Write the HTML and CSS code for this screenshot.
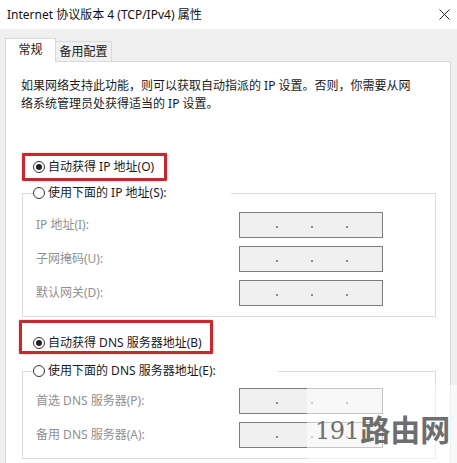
FILE: index.html
```html
<!DOCTYPE html>
<html lang="zh-CN">
<head>
<meta charset="utf-8">
<title>Internet 协议版本 4 (TCP/IPv4) 属性</title>
<link rel="stylesheet" href="styles.css">
</head>
<body>
<div class="page">
  <div class="titlebar">
    <span class="title">Internet 协议版本 4 (TCP/IPv4) 属性</span>
    <svg class="close" width="11" height="11" viewBox="0 0 11 11"><path d="M0.5 0.5 L10.5 10.5 M10.5 0.5 L0.5 10.5" stroke="#222" stroke-width="1" fill="none"/></svg>
  </div>
  <div class="area">
    <div class="tabs">
      <div class="tab tab-active">常规</div>
      <div class="tab">备用配置</div>
    </div>
    <div class="panel">
      <p class="desc">如果网络支持此功能，则可以获取自动指派的 IP 设置。否则，你需要从网<br>络系统管理员处获得适当的 IP 设置。</p>

      <div class="radio-row row-auto-ip">
        <span class="radio checked"></span><span>自动获得 IP 地址(O)</span>
        <span class="mark mark-ip"></span>
      </div>

      <fieldset class="group group-ip">
        <legend class="radio-row legend-ip"><span class="radio"></span><span>使用下面的 IP 地址(S):</span></legend>
        <div class="fields">
          <span class="label">IP 地址(I):</span>
          <div class="ip"><i class="dot"></i><i class="dot"></i><i class="dot"></i></div>
          <span class="label">子网掩码(U):</span>
          <div class="ip"><i class="dot"></i><i class="dot"></i><i class="dot"></i></div>
          <span class="label">默认网关(D):</span>
          <div class="ip"><i class="dot"></i><i class="dot"></i><i class="dot"></i></div>
        </div>
      </fieldset>

      <div class="radio-row row-auto-dns">
        <span class="radio checked"></span><span>自动获得 DNS 服务器地址(B)</span>
        <span class="mark mark-dns"></span>
      </div>

      <fieldset class="group group-dns">
        <legend class="radio-row legend-dns"><span class="radio"></span><span>使用下面的 DNS 服务器地址(E):</span></legend>
        <div class="fields fields-dns">
          <span class="label">首选 DNS 服务器(P):</span>
          <div class="ip"><i class="dot"></i><i class="dot"></i><i class="dot"></i></div>
          <span class="label">备用 DNS 服务器(A):</span>
          <div class="ip"><i class="dot"></i><i class="dot"></i><i class="dot"></i></div>
        </div>
      </fieldset>
    </div>
  </div>
  <div class="watermark"><span class="wm-num">191</span><span class="wm-cn">路由网</span></div>
</div>
</body>
</html>
```

FILE: styles.css
```css
html, body {
  margin: 0;
  padding: 0;
}
body {
  width: 457px;
  height: 463px;
  overflow: hidden;
  background: #f0f0f0;
  font-family: "Noto Sans", "Noto Sans CJK SC", sans-serif;
  font-size: 12px;
  color: #1a1a1a;
}
.page {
  position: relative;
  width: 457px;
  height: 463px;
  overflow: hidden;
}
.titlebar {
  height: 29px;
  background: #fff;
  display: flex;
  align-items: center;
  justify-content: space-between;
  padding: 0 7px 0 7px;
  box-sizing: border-box;
}
.title {
  font-size: 12px;
  line-height: 16px;
  color: #111;
}
.close {
  display: block;
  margin-right: 0;
}
.area {
  padding: 0 6px 0 5px;
}
.tabs {
  height: 32px;
  display: flex;
  align-items: flex-end;
  position: relative;
  z-index: 2;
}
.tab {
  box-sizing: border-box;
  height: 20px;
  width: 56px;
  border: 1px solid #d9d9d9;
  border-left: none;
  border-bottom: none;
  background: #f0f0f0;
  display: flex;
  align-items: center;
  justify-content: center;
  font-size: 12px;
  line-height: 14px;
  padding-top: 1px;
}
.tab-active {
  width: 51px;
  height: 24px;
  margin-bottom: -1px;
  background: #fff;
  border-left: 1px solid #d9d9d9;
  padding: 0 0 2px 0;
}
.panel {
  background: #fff;
  border: 1px solid #d9d9d9;
  height: 420px;
  padding: 15px 0 0 15px;
  box-sizing: border-box;
}
.desc {
  margin: 0;
  line-height: 18px;
  font-size: 12px;
  color: #1a1a1a;
  white-space: nowrap;
}
.radio-row {
  position: relative;
  display: flex;
  align-items: center;
  height: 16px;
  line-height: 16px;
  padding-left: 12px;
  color: #1a1a1a;
}
.radio {
  box-sizing: border-box;
  width: 12px;
  height: 12px;
  border: 1px solid #333;
  border-radius: 50%;
  margin-right: 3px;
  display: flex;
  align-items: center;
  justify-content: center;
  background: #fff;
}
.radio.checked::after {
  content: "";
  width: 6px;
  height: 6px;
  border-radius: 50%;
  background: #222;
}
.row-auto-ip {
  margin-top: 46px;
}
.row-auto-dns {
  margin-top: 18px;
}
.mark {
  position: absolute;
  box-sizing: border-box;
  border: 3px solid #c22a2f;
  border-radius: 1px;
  box-shadow: 0 0 2px rgba(200, 40, 45, 0.45);
  pointer-events: none;
}
.mark-ip {
  left: 1px;
  top: -6px;
  width: 145px;
  height: 28px;
}
.mark-dns {
  left: -2px;
  top: -15px;
  width: 194px;
  height: 34px;
}
.group {
  margin: 10px 0 0 1px;
  padding: 0;
  width: 414px;
  box-sizing: border-box;
  border: 1px solid #dcdcdc;
  min-inline-size: 0;
}
.group-dns {
  margin-top: 12px;
}
.group legend {
  margin-left: 10px;
  padding: 0;
  box-sizing: border-box;
}
.legend-ip {
  width: 198px;
  padding-left: 0;
}
.legend-dns {
  width: 245px;
  padding-left: 0;
}
.group .radio-row {
  padding-left: 0;
}
.fields {
  display: grid;
  grid-template-columns: 203px 144px;
  row-gap: 8px;
  padding: 11px 0 10px 13px;
  align-items: center;
}
.fields-dns {
  padding-top: 9px;
}
.label {
  color: #8f8f8f;
  line-height: 16px;
}
.ip {
  box-sizing: border-box;
  height: 26px;
  border: 1px solid #7c7c7c;
  background: #f0f0f0;
  display: flex;
  align-items: center;
  padding: 3px 0 0 36px;
  gap: 33px;
}
.dot {
  display: block;
  width: 2px;
  height: 2px;
  background: #8a8a8a;
}
.watermark {
  position: absolute;
  left: 307px;
  top: 385px;
  right: 0;
  bottom: 0;
  background: rgba(255, 255, 255, 0.55);
  display: flex;
  align-items: flex-start;
  padding: 28px 0 0 8px;
  box-sizing: border-box;
  color: #6e6e6e;
  font-weight: bold;
}
.wm-num {
  font-family: "DejaVu Serif", "Liberation Serif", serif;
  font-size: 24px;
  line-height: 30px;
  font-weight: normal;
  padding-top: 3px;
  letter-spacing: -0.5px;
  margin-right: 1px;
}
.wm-cn {
  font-family: "Noto Sans CJK SC", sans-serif;
  font-size: 30px;
  line-height: 30px;
  font-weight: bold;
}
```
